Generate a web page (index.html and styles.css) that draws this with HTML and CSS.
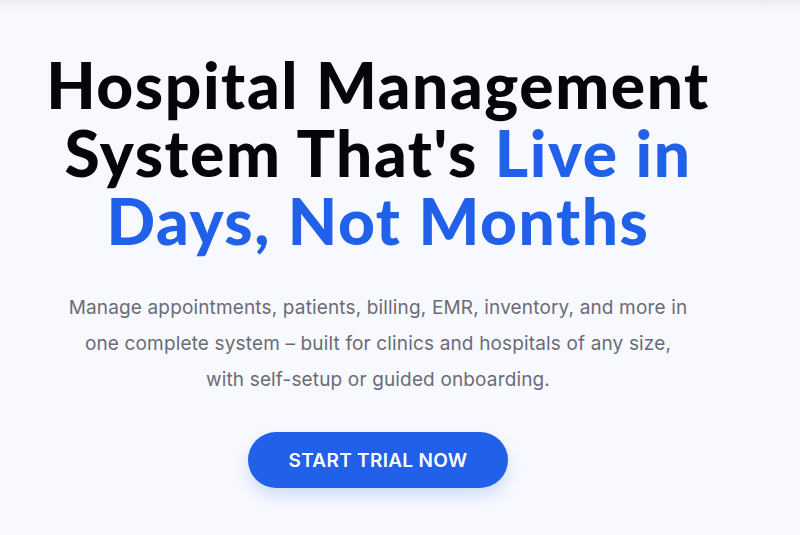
FILE: index.html
```html
<!DOCTYPE html>
<html lang="en">
<head>
<meta charset="utf-8">
<title>Hospital Management System</title>
<link rel="stylesheet" href="styles.css">
</head>
<body>
<div class="topbar"></div>
<section class="hero">
  <h1 class="hero-title">Hospital Management<br>System That's <span class="accent">Live in<br>Days, Not Months</span></h1>
  <p class="hero-text">Manage appointments, patients, billing, EMR, inventory, and more in<br>one complete system – built for clinics and hospitals of any size,<br>with self-setup or guided onboarding.</p>
  <a class="cta" href="#">START TRIAL NOW</a>
</section>
</body>
</html>
```
FILE: styles.css
```css
html, body {
  margin: 0;
  padding: 0;
  background: #f8f9fe;
}
body {
  width: 800px;
  height: 535px;
  overflow: hidden;
}
.topbar {
  height: 14px;
  background: linear-gradient(#ececf4, #f8f9fe);
}
.hero {
  width: 756px;
  display: flex;
  flex-direction: column;
  align-items: center;
  text-align: center;
}
.hero-title {
  margin: 37px 0 0;
  font-family: "Lato", sans-serif;
  font-weight: 900;
  font-size: 64px;
  line-height: 68px;
  color: #05050a;
  letter-spacing: 1.6px;
}
.accent {
  color: #2160e8;
}
.hero-text {
  margin: 35px 0 0;
  font-family: "Inter", sans-serif;
  font-size: 19px;
  line-height: 36px;
  letter-spacing: 0.15px;
  color: #6b6b76;
}
.cta {
  margin-top: 34px;
  width: 260px;
  height: 56px;
  display: flex;
  align-items: center;
  justify-content: center;
  border-radius: 28px;
  background: #2160e8;
  color: #ffffff;
  font-family: "Inter", sans-serif;
  font-weight: 600;
  font-size: 19px;
  letter-spacing: 0.3px;
  text-decoration: none;
  box-shadow: 0 8px 16px rgba(33, 96, 232, 0.18);
}
```
